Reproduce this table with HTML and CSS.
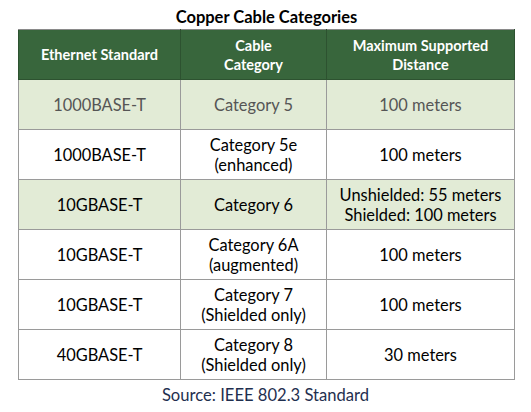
FILE: index.html
```html
<!DOCTYPE html>
<html>
<head>
<meta charset="utf-8">
<link rel="stylesheet" href="styles.css">
</head>
<body>
<div class="page">
  <h1 class="title">Copper Cable Categories</h1>
  <table class="cables">
    <colgroup>
      <col class="c1"><col class="c2"><col class="c3">
    </colgroup>
    <thead>
      <tr>
        <th>Ethernet Standard</th>
        <th>Cable<br>Category</th>
        <th>Maximum Supported<br>Distance</th>
      </tr>
    </thead>
    <tbody>
      <tr class="shade muted">
        <td>1000BASE-T</td><td>Category 5</td><td>100 meters</td>
      </tr>
      <tr>
        <td>1000BASE-T</td><td>Category 5e<br>(enhanced)</td><td>100 meters</td>
      </tr>
      <tr class="shade">
        <td>10GBASE-T</td><td>Category 6</td><td>Unshielded: 55 meters<br>Shielded: 100 meters</td>
      </tr>
      <tr>
        <td>10GBASE-T</td><td>Category 6A<br>(augmented)</td><td>100 meters</td>
      </tr>
      <tr>
        <td>10GBASE-T</td><td>Category 7<br>(Shielded only)</td><td>100 meters</td>
      </tr>
      <tr>
        <td>40GBASE-T</td><td>Category 8<br>(Shielded only)</td><td>30 meters</td>
      </tr>
    </tbody>
  </table>
  <p class="source">Source: IEEE 802.3 Standard</p>
</div>
</body>
</html>
```

FILE: styles.css
```css
html, body {
  margin: 0;
  padding: 0;
  background: #ffffff;
}
.page {
  width: 531px;
  font-family: Lato, "Open Sans", "Liberation Sans", sans-serif;
  color: #000;
}
.title {
  margin: 0;
  height: 29px;
  line-height: 34px;
  font-size: 16.5px;
  font-weight: 700;
  text-align: center;
  padding-left: 2px;
  color: #000;
}
.cables {
  margin-left: 18px;
  width: 496px;
  border-collapse: collapse;
  table-layout: fixed;
}
.c1 { width: 162px; }
.c2 { width: 146px; }
.c3 { width: 188px; }
.cables th {
  background: #38663c;
  color: #ffffff;
  font-weight: 700;
  font-size: 14.5px;
  line-height: 19px;
  height: 49px;
  padding: 0;
  border: 1px solid #2d5230;
  border-top-color: #8a8a8a;
}
.cables td {
  height: 49px;
  padding: 0;
  text-align: center;
  font-size: 16.4px;
  line-height: 20px;
  border: 1px solid #9a9a9a;
  color: #000;
}
.cables tr.shade td {
  background: #e2ebd6;
}
.cables tr.muted td {
  color: #555;
}
.source {
  margin: 5px 0 0 0;
  text-align: center;
  font-size: 16.6px;
  color: #1f2f4f;
}
```
